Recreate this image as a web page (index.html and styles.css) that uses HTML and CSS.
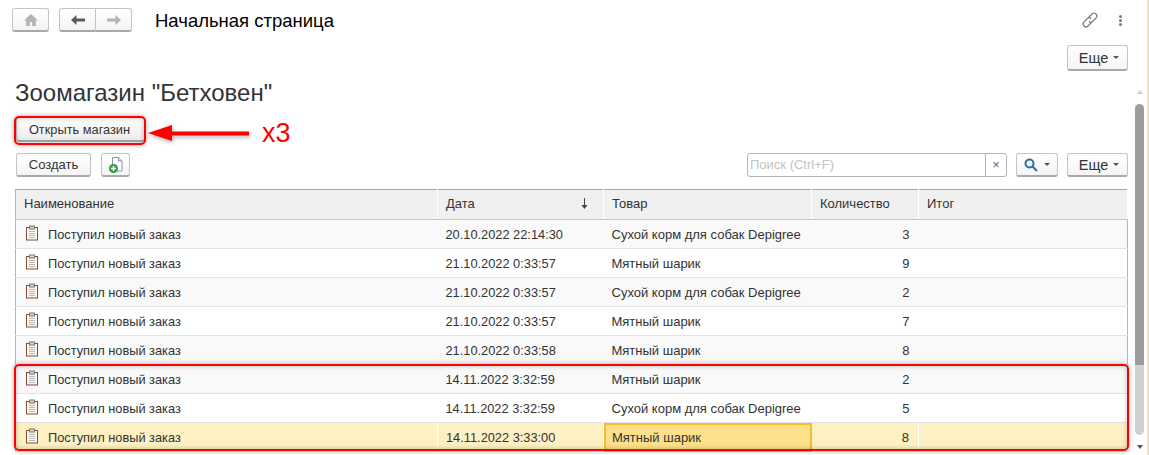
FILE: index.html
```html
<!DOCTYPE html>
<html lang="ru">
<head>
  <meta charset="UTF-8" />
  <title>Начальная страница</title>
  <link rel="stylesheet" href="styles.css">
</head>
<body>
  <div class="page">
    <div class="topbar">
      <button class="btn btn-home">
        <svg width="16" height="14" viewBox="0 0 16 14"><path d="M8 1 1 7.500h2.200V13h3.600V9h2.400v4h3.600V7.500H15z" fill="#b3b3b3"/></svg>
      </button>
      <div class="nav-group">
        <button class="btn nav-btn">
          <svg width="16" height="12" viewBox="0 0 16 12"><path d="M1 6 6.500 1v3.500H15v3H6.500V11z" fill="#5a5a5a"/></svg>
        </button>
        <button class="btn nav-btn">
          <svg width="16" height="12" viewBox="0 0 16 12"><path d="M15 6 9.500 1v3.500H1v3h8.500V11z" fill="#b3b3b3"/></svg>
        </button>
      </div>
      <div class="page-title">Начальная страница</div>
      <div class="top-icons">
        <svg width="18" height="18" viewBox="0 0 18 18" fill="none" stroke="#777" stroke-width="1.100"><path d="M7.500 6.500 11 3a2.600 2.600 0 0 1 4 4l-3.500 3.500a2.600 2.600 0 0 1-3.600 0"/><path d="M10.500 11.500 7 15a2.600 2.600 0 0 1-4-4l3.500-3.500a2.600 2.600 0 0 1 3.600 0"/></svg>
        <span class="dots"><i></i><i></i><i></i></span>
      </div>
    </div>

    <div class="more-row">
      <button class="btn btn-more">Еще <span class="caret"></span></button>
    </div>

    <div class="content">
      <h1>Зоомагазин "Бетховен"</h1>
      <button class="btn btn-open">Открыть магазин</button>

      <div class="toolbar">
        <button class="btn btn-create">Создать</button>
        <button class="btn btn-doc">
          <svg width="16" height="18" viewBox="0 0 16 18"><path d="M4.500 1.500h6l3.500 3.500v10h-9.500z" fill="#fff" stroke="#8a93a0"/><path d="M10.500 1.500V5H14" fill="#e4e8ee" stroke="#8a93a0"/><circle cx="5.500" cy="12.500" r="4.500" fill="#2f9e44"/><path d="M5.500 10v5M3 12.500h5" stroke="#fff" stroke-width="1.600"/></svg>
        </button>
        <div class="search">
          <span class="search-text">Поиск (Ctrl+F)</span>
          <span class="search-clear">×</span>
        </div>
        <button class="btn btn-find">
          <svg width="14" height="14" viewBox="0 0 14 14" fill="none" stroke="#2a6ea6" stroke-width="2"><circle cx="5.500" cy="5.500" r="4"/><path d="m8.500 8.500 4.500 4.500"/></svg>
          <span class="caret"></span>
        </button>
        <button class="btn btn-more">Еще <span class="caret"></span></button>
      </div>

      <table class="grid">
        <colgroup>
          <col class="col-name"><col class="col-date"><col class="col-item"><col class="col-qty"><col>
        </colgroup>
        <thead>
          <tr>
            <th>Наименование</th>
            <th>
              <span class="sort-cell">Дата
                <svg width="7" height="11" viewBox="0 0 7 11"><path d="M3.500 0v8" stroke="#444"/><path d="M.5 7h6l-3 4z" fill="#444"/></svg>
              </span>
            </th>
            <th>Товар</th>
            <th>Количество</th>
            <th>Итог</th>
          </tr>
        </thead>
        <tbody id="rows"></tbody>
      </table>
    </div>

    <div class="scrollbar">
      <span class="arrow-up"></span>
      <span class="thumb"></span>
      <span class="arrow-down"></span>
    </div>

    <div class="mark mark-open"></div>
    <div class="mark mark-rows"></div>
    <svg class="red-arrow" width="102" height="18" viewBox="0 0 102 18"><path d="M0 9 24 1v6.500h77v4H24V17z" fill="#f00"/></svg>
    <div class="x3">х3</div>
  </div>
  <script>
    const заказы = [
      ["20.10.2022 22:14:30", "Сухой корм для собак Depigree", 3, true],
      ["21.10.2022 0:33:57", "Мятный шарик", 9, false],
      ["21.10.2022 0:33:57", "Сухой корм для собак Depigree", 2, true],
      ["21.10.2022 0:33:57", "Мятный шарик", 7, false],
      ["21.10.2022 0:33:58", "Мятный шарик", 8, true],
      ["14.11.2022 3:32:59", "Мятный шарик", 2, true],
      ["14.11.2022 3:32:59", "Сухой корм для собак Depigree", 5, false],
      ["14.11.2022 3:33:00", "Мятный шарик", 8, false]
    ];
    const иконка = `<svg class="doc-icon" width="14" height="16" viewBox="0 0 14 16"><rect x="1.500" y="2.500" width="11" height="12.500" fill="#fbf8ef" stroke="#8a4b32"/><path d="M4 6.500h6M4 8.500h6M4 10.500h6M4 12.500h6" stroke="#b9b9b9"/><rect x="4.500" y="1" width="5" height="3" fill="#d8d3c4" stroke="#777"/></svg>`;
    document.getElementById('rows').innerHTML = заказы.map((з, i) => {
      const last = i === заказы.length - 1;
      return `
      <tr class="${last ? 'current' : (з[3] ? 'alt' : '')}">
        <td class="narrow"><span class="name-cell">${иконка}Поступил новый заказ</span></td>
        <td class="narrow">${з[0]}</td>
        <td class="${last ? 'active' : ''}">${з[1]}</td>
        <td class="num">${з[2]}</td>
        <td></td>
      </tr>`;
    }).join('');
  </script>
</body>
</html>
```

FILE: styles.css
```css
html, body {
  margin: 0;
  height: 100%;
  overflow: hidden;
  background: #fff;
}
body {
  font-family: "Liberation Sans", Arial, sans-serif;
  font-size: 13px;
  color: #333;
}
.page {
  position: relative;
  width: 1149px;
  height: 455px;
  overflow: hidden;
  border-right: 2px solid #e9e2c4;
  box-sizing: border-box;
}
.btn {
  font-family: inherit;
  font-size: 13px;
  color: #333;
  height: 24px;
  padding: 0;
  background: linear-gradient(#fff, #f4f4f4);
  border: 1px solid #c4c4c4;
  border-bottom: 2px solid #a9a9a9;
  border-radius: 3px;
  display: flex;
  align-items: center;
  justify-content: center;
  box-sizing: border-box;
}
.topbar {
  display: flex;
  align-items: center;
  padding: 8px 25px 0 12px;
  height: 24px;
}
.btn-home {
  width: 37px;
}
.nav-group {
  display: flex;
  margin-left: 10px;
}
.nav-btn {
  width: 37px;
  border-radius: 3px 0 0 3px;
}
.nav-btn + .nav-btn {
  width: 36px;
  border-left: 0;
  border-radius: 0 3px 3px 0;
}
.page-title {
  margin: 1px 0 0 23px;
  font-size: 18.500px;
  color: #000;
}
.top-icons {
  margin-left: auto;
  display: flex;
  align-items: center;
  gap: 20px;
}
.dots {
  display: flex;
  flex-direction: column;
  gap: 1px;
}
.dots i {
  width: 3px;
  height: 3px;
  background: #777;
  border-radius: 50%;
}
.more-row {
  display: flex;
  justify-content: flex-end;
  padding: 13px 19px 0 0;
}
.more-row .btn-more {
  height: 26px;
}
.btn-more {
  width: 61px;
  gap: 5px;
  font-size: 14.500px;
  padding-left: 3px;
}
.caret {
  width: 0;
  height: 0;
  border-left: 3px solid transparent;
  border-right: 3px solid transparent;
  border-top: 3px solid #555;
}
.content {
  padding: 0 19px 0 15px;
}
h1 {
  margin: 8px 0 0;
  font-size: 24px;
  font-weight: normal;
  line-height: 27px;
  color: #333;
}
.btn-open {
  width: 129px;
  height: 25px;
  margin: 11px 0 0 1px;
  padding-right: 2px;
  font-size: 12.800px;
  background: linear-gradient(#fff, #ececec);
}
.toolbar {
  display: flex;
  align-items: center;
  margin: 11px 0 0 1px;
}
.btn-create {
  width: 75px;
}
.btn-doc {
  width: 29px;
  margin-left: 10px;
}
.search {
  display: flex;
  width: 260px;
  height: 24px;
  margin-left: auto;
  border: 1px solid #b5b5b5;
  border-radius: 3px;
  box-sizing: border-box;
}
.search-text {
  flex: 1;
  padding-left: 2px;
  line-height: 22px;
  color: #c3c3c3;
}
.search-clear {
  width: 20px;
  border-left: 1px solid #b5b5b5;
  text-align: center;
  line-height: 21px;
  color: #666;
}
.btn-find {
  width: 42px;
  margin-left: 9px;
  gap: 6px;
}
.toolbar .btn-more {
  margin-left: 9px;
}
.grid {
  width: 1113px;
  margin-top: 12px;
  border-collapse: collapse;
  table-layout: fixed;
  border-top: 1px solid #a8a8a8;
  border-left: 1px solid #b5b5b5;
  border-right: 1px solid #b5b5b5;
}
.col-name { width: 422px; }
.col-date { width: 166px; }
.col-item { width: 208px; }
.col-qty { width: 107px; }
.grid th {
  height: 30px;
  padding: 0 8px 2px;
  box-sizing: border-box;
  font-weight: normal;
  text-align: left;
  background: #f0f0f0;
  border-right: 1px solid #fff;
  border-bottom: 1px solid #c4c4c4;
}
.sort-cell {
  display: flex;
  justify-content: space-between;
  align-items: center;
  padding-right: 7px;
}
.grid td {
  height: 28px;
  padding: 0 8px;
  white-space: nowrap;
  border-bottom: 1px solid #e2e2e2;
  color: #333;
}
.grid td.narrow {
  font-size: 12.800px;
}
.grid tbody tr.alt td {
  background: #f9f9f9;
}
.name-cell {
  display: flex;
  align-items: center;
  gap: 9px;
  padding-left: 1px;
}
.doc-icon {
  margin-top: -3px;
}
.grid td.num {
  text-align: right;
  padding-right: 9px;
}
.grid tbody tr.current td {
  background: #fdf0c2;
  border-right: 1px solid #fff;
  border-bottom-color: #fdf0c2;
}
.grid tbody tr.current td.active {
  background: #fde08a;
  outline: 2px solid #f5bd30;
  outline-offset: -2px;
}
.scrollbar {
  position: absolute;
  top: 90px;
  left: 1135px;
  width: 9px;
  height: 360px;
  display: flex;
  flex-direction: column;
  align-items: center;
}
.thumb {
  width: 9px;
  height: 331px;
  margin: 10px 0;
  border-radius: 5px;
  background: linear-gradient(#9c9c9c 0 79%, #d0d0d0 79%);
}
.arrow-up, .arrow-down {
  width: 0;
  height: 0;
  border-left: 3px solid transparent;
  border-right: 3px solid transparent;
}
.arrow-up {
  border-bottom: 4px solid #d0d0d0;
}
.arrow-down {
  border-top: 4px solid #555;
}
.mark {
  position: absolute;
  border: 2px solid #f00;
  border-radius: 5px;
  box-sizing: border-box;
  box-shadow: 0 0 5px rgba(0, 0, 0, 0.35), inset 0 0 5px rgba(0, 0, 0, 0.25);
}
.mark-open {
  left: 14px;
  top: 116px;
  width: 132px;
  height: 29px;
}
.mark-rows {
  left: 14px;
  top: 364px;
  width: 1115px;
  height: 87px;
}
.red-arrow {
  position: absolute;
  left: 148px;
  top: 124px;
  filter: drop-shadow(1px 2px 2px rgba(0, 0, 0, 0.3));
}
.x3 {
  position: absolute;
  left: 262px;
  top: 116px;
  font-size: 27px;
  line-height: 34px;
  color: #f00;
}
```
